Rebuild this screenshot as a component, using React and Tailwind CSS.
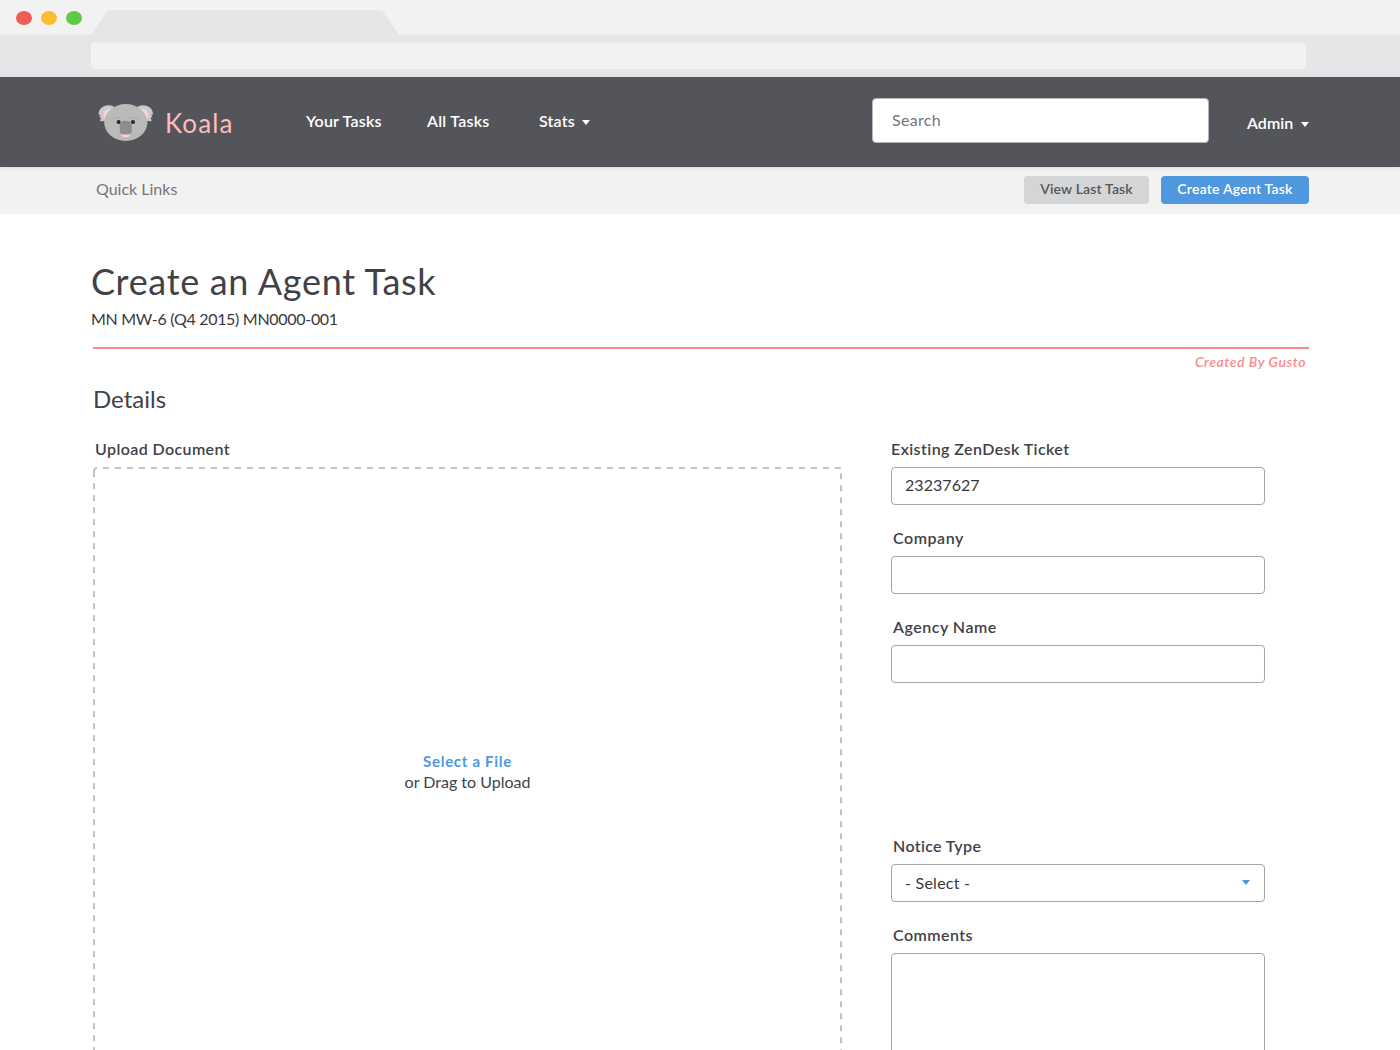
function Caret({ className }) {
  return (
    <svg className={className} width="8" height="5" viewBox="0 0 8 5" fill="currentColor" aria-hidden="true">
      <path d="M0 0h8L4 5z" />
    </svg>
  );
}

function KoalaLogo() {
  return (
    <svg width="56" height="38" viewBox="0 0 56 38" aria-hidden="true">
      <g id="koala-ear">
        <path
          d="M17 3.6C14 0.8 9.5 0.6 6.4 2C2.5 3.6 0.4 7 0.6 10.6L2.2 10.4L1.2 13.4L3 13.2L2 17.2L7.5 17L11 14Z"
          fill="#c9cacb"
        />
        <path d="M15 6C12.5 4 8.4 4.6 6.6 7.4C5 10 5.2 12.4 6 14.6L9 14Z" fill="#ffd3d3" />
      </g>
      <use href="#koala-ear" transform="translate(55.6 0) scale(-1 1)" />
      <ellipse cx="27.8" cy="18.5" rx="21.6" ry="18.5" fill="#bababa" />
      <path d="M14.6 15.6Q18 12 23.4 14.2M32.2 14.2Q37.6 12 41 15.6" fill="none" stroke="#a9a9a9" strokeWidth="0.9" />
      <circle cx="20.6" cy="18" r="2" fill="#222" />
      <circle cx="35" cy="18" r="2" fill="#222" />
      <circle cx="19.9" cy="17.3" r="0.35" fill="#ddd" />
      <circle cx="35.7" cy="17.3" r="0.35" fill="#ddd" />
      <path d="M23 29.6H32.6Q31.8 33.2 27.8 33.2Q23.8 33.2 23 29.6Z" fill="#ffd3d3" />
      <path
        d="M21.8 20.4Q22.4 16.8 27.8 16.8Q33.2 16.8 33.8 20.4V27.4Q33.6 30.6 27.8 30.6Q22 30.6 21.8 27.4Z"
        fill="#8e8e8e"
      />
      <path d="M24.4 19.4Q26 18.6 27.2 19.4M28.4 19.4Q29.6 18.6 31.2 19.4" fill="none" stroke="#7b7b7b" strokeWidth="0.8" />
    </svg>
  );
}

function BrowserChrome() {
  return (
    <div className="h-[77px] bg-[#e6e6e8]">
      <div className="flex h-[35px] items-end border-b border-[#ececed] bg-[#f2f2f2]">
        <div className="flex w-[91px] shrink-0 gap-[9px] pb-[9px] pl-[15.5px]">
          <span className="h-3.5 w-4 rounded-[50%] bg-[#ee5c54]" />
          <span className="h-3.5 w-4 rounded-[50%] bg-[#f8bd32]" />
          <span className="h-3.5 w-4 rounded-[50%] bg-[#62c943]" />
        </div>
        <div className="-mb-px h-[25px] w-[308px] bg-[#e6e6e8] [clip-path:polygon(17px_0,291px_0,100%_100%,0_100%)]" />
      </div>
      <div className="flex h-[42px] items-start border-b border-[#e9e9ea] pl-[91px] pt-[8px]">
        <div className="h-[26px] w-[1215px] rounded bg-[#f2f2f2] shadow-[0_-1px_0_#ececed]" />
      </div>
    </div>
  );
}

function Header() {
  return (
    <header className="relative z-10 flex h-[90px] items-start bg-[#54555a] text-base leading-6 font-semibold text-white shadow-[0_1px_4px_rgba(0,0,0,0.1)]">
      <div className="flex w-[306px] items-start pl-[98px]">
        <div className="mt-[27px]">
          <KoalaLogo />
        </div>
        <span className="ml-[11px] mt-[30px] text-[26px] leading-8 font-normal tracking-[1.1px] text-[#ffbcbc]">Koala</span>
      </div>
      <nav className="flex w-[566px] pt-[32px]">
        <a className="w-[121px] tracking-[0.2px]">Your Tasks</a>
        <a className="w-[112px] tracking-[0.25px]">All Tasks</a>
        <a className="flex items-center tracking-[0.2px]">
          Stats
          <Caret className="ml-[7px] mt-[2px]" />
        </a>
      </nav>
      <div className="mt-[21px] h-[45px] w-[337px] rounded border border-[#b4b5ba] bg-white pl-[19px] pt-[9px] font-normal tracking-[0.3px] text-[#74757c]">
        Search
      </div>
      <a className="ml-[38px] mt-[34px] flex items-center tracking-[0.05px]">
        Admin
        <Caret className="ml-[7.5px] mt-[2px]" />
      </a>
    </header>
  );
}

function QuickLinks() {
  return (
    <div className="flex h-[47px] items-start bg-[#f2f2f2] pl-[96px] pr-[91px] pt-[9px]">
      <span className="mt-px text-base leading-6 text-[#74757c]">Quick Links</span>
      <button className="ml-auto h-7 w-[125px] rounded bg-[#d4d5d7] pb-[2px] text-sm leading-5 font-semibold tracking-[0.15px] text-[#54555a]">
        View Last Task
      </button>
      <button className="ml-3 h-7 w-[148px] rounded bg-[#4f98df] pb-[2px] text-sm leading-5 font-semibold tracking-[0.22px] text-white">
        Create Agent Task
      </button>
    </div>
  );
}

const labelClass = "text-base leading-6 font-semibold text-[#414247]";
const fieldClass =
  "rounded border border-[#a4a5a9] bg-white pl-[13px] pr-[14px] text-base leading-6 text-[#38393d]";

function DropZone() {
  return (
    <section className="w-[749px]">
      <div className={labelClass + " pl-[2px] tracking-[0.4px]"}>Upload Document</div>
      <div className="relative mt-[6px] flex h-[620px] flex-col items-center pt-[283px] text-[#414247]">
        <svg
          className="absolute inset-0"
          width="749"
          height="620"
          fill="none"
          stroke="#c1c2c6"
          strokeWidth="2"
          aria-hidden="true"
        >
          <path d="M4.2 1Q1 1 1 4.2V10.3" />
          <path d="M9.9 1H748" strokeDasharray="6 6" />
          <path d="M748 6.2V620" strokeDasharray="6 6" />
          <path d="M1 16.2V620" strokeDasharray="6 6" />
        </svg>
        <a className="text-[15px] leading-[22px] font-bold tracking-[0.7px] text-[#4f98df]">Select a File</a>
        <span className="text-base leading-5">or Drag to Upload</span>
      </div>
    </section>
  );
}

function TicketForm() {
  return (
    <section className="w-[374px]">
      <div className={labelClass + " tracking-[0.42px]"}>Existing ZenDesk Ticket</div>
      <div className={fieldClass + " mt-[6px] h-[38px] pt-[5px] tracking-[0.05px]"}>23237627</div>

      <div className={labelClass + " mt-[21px] pl-[2px] tracking-[0.55px]"}>Company</div>
      <div className={fieldClass + " mt-[6px] h-[38px]"} />

      <div className={labelClass + " mt-[21px] pl-[2px] tracking-[0.5px]"}>Agency Name</div>
      <div className={fieldClass + " mt-[6px] h-[38px]"} />

      <div className={labelClass + " mt-[151px] pl-[2px] tracking-[0.35px]"}>Notice Type</div>
      <div className={fieldClass + " mt-[6px] flex h-[38px] items-start justify-between pt-[6px] tracking-[0.25px]"}>
        - Select -
        <Caret className="mt-[9px] text-[#4f98df]" />
      </div>

      <div className={labelClass + " mt-[21px] pl-[2px] tracking-[0.45px]"}>Comments</div>
      <div className={fieldClass + " mt-[6px] h-[140px]"} />
    </section>
  );
}

export default function App() {
  return (
    <div className="h-[1050px] w-[1400px] overflow-hidden bg-white font-['Lato',sans-serif] whitespace-nowrap">
      <BrowserChrome />
      <Header />
      <QuickLinks />
      <main className="pl-[93px] pr-[91px]">
        <h1 className="-ml-[2px] pt-[45px] text-[36px] leading-[44px] tracking-[0.68px] text-[#414247]">
          Create an Agent Task
        </h1>
        <p className="-ml-[2px] mt-[4px] text-base leading-6 tracking-[-0.3px] text-[#38393d]">
          MN MW-6 (Q4 2015) MN0000-001
        </p>
        <div className="mt-[16px] h-[2px] bg-[#f98b8b]" />
        <div className="mt-[3px] pr-[3px] text-right text-sm leading-5 font-semibold tracking-[0.55px] text-[#f98b8b] italic">
          Created By Gusto
        </div>
        <h2 className="mt-[11px] text-[24px] leading-8 text-[#414247]">Details</h2>
        <div className="mt-[22px] flex gap-[49px]">
          <DropZone />
          <TicketForm />
        </div>
      </main>
    </div>
  );
}
